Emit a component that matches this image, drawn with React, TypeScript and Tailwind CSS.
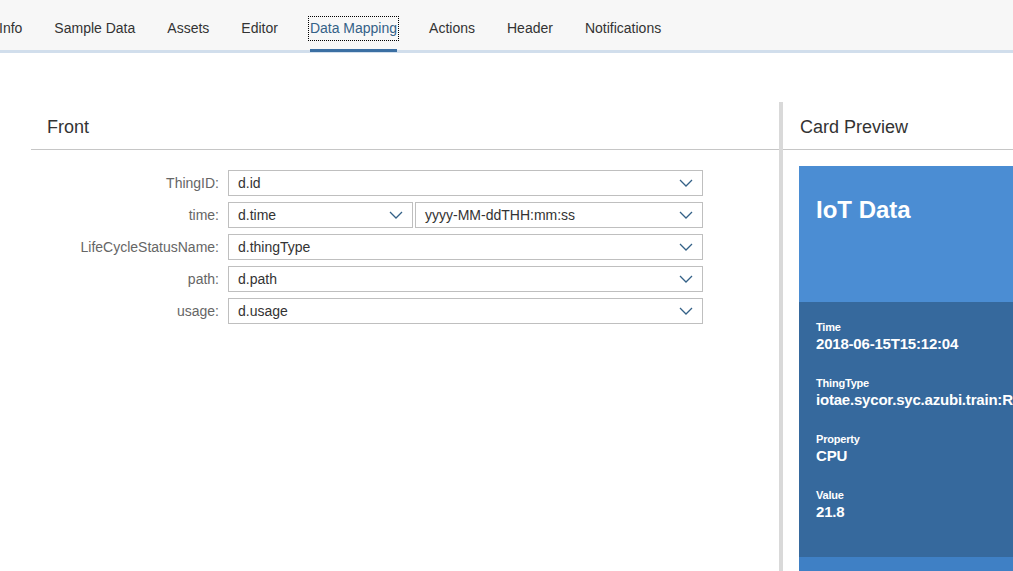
import React from 'react';

const tabs = ['Info', 'Sample Data', 'Assets', 'Editor', 'Data Mapping', 'Actions', 'Header', 'Notifications'];

function Chevron() {
    return (
        <svg width="14" height="8" viewBox="0 0 14 8" className="shrink-0">
            <polyline points="1,1 7,7 13,1" fill="none" stroke="#346187" strokeWidth="1.3" />
        </svg>
    );
}

function Select({ value, className }: { value: string; className?: string }) {
    return (
        <div className={`h-[26px] border border-[#bfbfbf] bg-white flex items-center justify-between pl-[9px] pr-[9px] text-[14px] text-[#333] ${className ?? ''}`}>
            <span>{value}</span>
            <Chevron />
        </div>
    );
}

function Row({ label, children }: { label: string; children: React.ReactNode }) {
    return (
        <div className="flex items-center">
            <div className="w-[188px] text-right text-[14px] text-[#666]">{label}</div>
            <div className="ml-[9px] w-[475px] flex gap-[2px]">{children}</div>
        </div>
    );
}

function Field({ label, value }: { label: string; value: string }) {
    return (
        <div className="flex flex-col gap-[1px]">
            <span className="text-[11px] leading-[14px] font-bold tracking-[-0.2px] text-white">{label}</span>
            <span className="text-[15px] leading-[18px] font-bold tracking-[-0.2px] text-white whitespace-nowrap">{value}</span>
        </div>
    );
}

export default function App() {
    return (
        <div className="h-[571px] overflow-hidden bg-white font-['Liberation_Sans',Arial,sans-serif]">
            {/* Tab bar */}
            <div className="h-[53px] bg-[#f7f7f7] border-b-[3px] border-[#d1deec]">
                <nav className="flex -ml-[17px] h-[50px]">
                    {tabs.map((tab) => {
                        const active = tab === 'Data Mapping';
                        return (
                            <div
                                key={tab}
                                className={`h-[52px] -mb-[2px] mx-[16px] pt-[8px] flex items-center border-b-[3px] text-[14px] ${active ? 'border-[#3b6fa3] text-[#346187]' : 'border-transparent text-[#333]'}`}
                            >
                                <span className={active ? 'outline-1 outline-dotted outline-black outline-offset-[1px]' : ''}>{tab}</span>
                            </div>
                        );
                    })}
                </nav>
            </div>

            {/* Content */}
            <div className="flex pt-[49px] pl-[31px] h-[518px]">
                {/* Front */}
                <div className="w-[748px] shrink-0">
                    <div className="h-[48px] flex items-center pl-[16px] pt-[3px] border-b border-[#c6c6c6] text-[18px] text-[#333]">
                        Front
                    </div>
                    <div className="pt-[20px] flex flex-col gap-[6px]">
                        <Row label="ThingID:">
                            <Select value="d.id" className="flex-1" />
                        </Row>
                        <Row label="time:">
                            <Select value="d.time" className="w-[185px]" />
                            <Select value="yyyy-MM-ddTHH:mm:ss" className="flex-1" />
                        </Row>
                        <Row label="LifeCycleStatusName:">
                            <Select value="d.thingType" className="flex-1" />
                        </Row>
                        <Row label="path:">
                            <Select value="d.path" className="flex-1" />
                        </Row>
                        <Row label="usage:">
                            <Select value="d.usage" className="flex-1" />
                        </Row>
                    </div>
                </div>

                {/* Splitter */}
                <div className="w-[4px] shrink-0 bg-[#d9d9d9]" />

                {/* Card Preview */}
                <div className="flex-1 overflow-hidden">
                    <div className="h-[48px] flex items-center pl-[17px] pt-[3px] border-b border-[#c6c6c6] text-[18px] text-[#333] whitespace-nowrap">
                        Card Preview
                    </div>
                    <div className="ml-[16px] mt-[16px] w-[320px]">
                        <div className="h-[136px] bg-[#4b8dd3] pl-[17px] pt-[30px]">
                            <h2 className="text-[24px] leading-[28px] font-bold text-white">IoT Data</h2>
                        </div>
                        <div className="bg-[#36699d] pl-[17px] pt-[18px] pb-[36px] flex flex-col gap-[23px]">
                            <Field label="Time" value="2018-06-15T15:12:04" />
                            <Field label="ThingType" value="iotae.sycor.syc.azubi.train:RaspberryPi" />
                            <Field label="Property" value="CPU" />
                            <Field label="Value" value="21.8" />
                        </div>
                        <div className="h-[40px] bg-[#3f80c5]" />
                    </div>
                </div>
            </div>
        </div>
    );
}
